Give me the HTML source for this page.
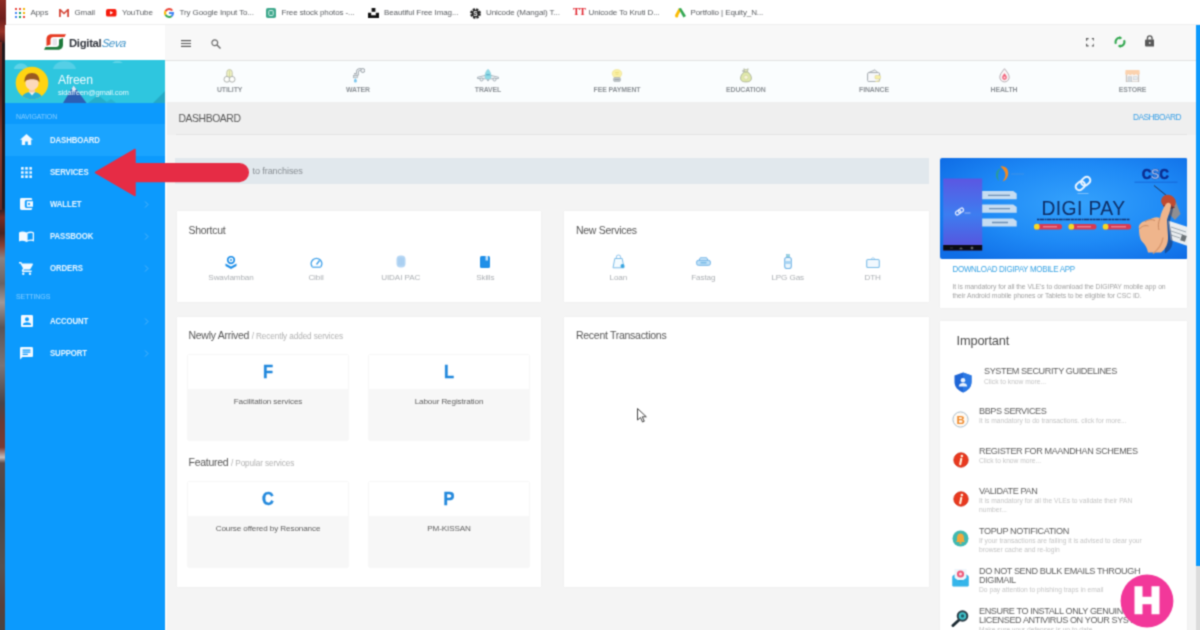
<!DOCTYPE html>
<html>
<head>
<meta charset="utf-8">
<title>Digital Seva</title>
<style>
*{box-sizing:border-box;margin:0;padding:0}
html,body{width:1200px;height:630px;overflow:hidden;background:#f4f4f4;font-family:"Liberation Sans",sans-serif;}
body{position:relative;filter:url(#gb);}
.abs{position:absolute}
.t{position:absolute;white-space:nowrap;line-height:1}
/* left strip */
#strip{left:0;top:0;width:5.500px;height:630px;background:linear-gradient(180deg,#8c2c24 0%,#6e1f1c 3%,#9a3428 5%,#6a201c 6.300%,#20181c 7%,#1c1a22 20%,#221c24 33%,#7a2c24 34.500%,#4a2420 37%,#8a4034 39%,#8a8282 41%,#6a6264 45%,#a09898 48%,#5a5456 52%,#7a7476 58%,#4a4448 64%,#6a3a34 67%,#7a3a32 71%,#c4bcbc 72.600%,#5a4a4a 73.500%,#4a4646 80%,#56504f 90%,#5a403c 96%,#4a4444 100%);}
/* bookmarks */
#bm{left:5.500px;top:0;width:1194.500px;height:25px;background:#fff;border-bottom:1px solid #efefef}
#bm .t{top:9px;font-size:8px;color:#5a5d61;letter-spacing:-0.1px}
/* header */
#hdrL{left:5px;top:25px;width:160px;height:35px;background:#fff}
#hdrR{left:165px;top:25px;width:1031px;height:36px;background:#f8f8f8;border-bottom:1px solid #e2e2e2}
/* sidebar */
#side{left:5px;top:60px;width:160px;height:570px;background:#0c9afd}
#prof{left:0;top:0;width:160px;height:43px;background:#2ec6df;overflow:hidden}
#navact{left:0;top:64px;width:160px;height:32px;background:#1aa4ff}
.nl{font-size:7px;color:#86cdff;left:11px;letter-spacing:-0.1px}
.ni{font-size:7.800px;font-weight:bold;color:#eaf6ff;left:45px;letter-spacing:-0.100px;transform:scaleY(1.140);transform-origin:0 50%}
.chev{position:absolute;left:139px;width:5px;height:7px}
/* cat bar */
#cat{left:165px;top:61px;width:1031px;height:41px;background:#fafdfe}
#cat .t{font-size:6.900px;font-weight:bold;color:#8c9196;top:25.500px;transform:translateX(-50%);letter-spacing:-0.1px}
#ttl{left:165px;top:102px;width:1031px;height:33px;background:#efefef}
#ttlline{left:176px;top:134px;width:1011px;height:1px;background:#e3e3e3}
.card{position:absolute;background:#fff;box-shadow:0 0 2px rgba(0,0,0,0.04)}
.h{font-size:10.500px;color:#555;letter-spacing:-0.280px}
.sub{font-size:8.200px;color:#b0b0b0;letter-spacing:-0.100px}
.sl{font-size:8.100px;color:#abafb3;transform:translateX(-50%);letter-spacing:-0.1px}
.tile{position:absolute;width:160px;height:85px;background:#f7f7f7;box-shadow:0 0 1.5px rgba(0,0,0,0.12)}
.tile .top{position:absolute;left:0;top:0;width:160px;height:34px;background:#fff}
.tile .L{position:absolute;left:0;width:160px;text-align:center;top:8.500px;font-size:18.200px;font-weight:bold;color:#2288dc;line-height:1;transform:scaleX(0.900);-webkit-text-stroke:0.450px #2288dc}
.tile .N{position:absolute;left:0;width:160px;text-align:center;top:43px;font-size:8.100px;color:#5e5e5e;line-height:1;letter-spacing:-0.1px}
.it{font-size:9.100px;color:#5c5c5c;letter-spacing:-0.400px}
.is{font-size:6.700px;color:#c4c4c4}
</style>
</head>
<body>
<svg width="0" height="0" style="position:absolute"><filter id="gb" x="0" y="0" width="100%" height="100%" color-interpolation-filters="sRGB"><feConvolveMatrix order="3" kernelMatrix="1 3 1 3 9 3 1 3 1" divisor="25" edgeMode="duplicate" preserveAlpha="true"/></filter></svg>
<div id="strip" class="abs"></div><div class="abs" style="left:0;top:42px;width:2px;height:168px;background:linear-gradient(180deg,#7a2a22,#5a221e 30%,#8a3a2c 60%,#6a2a24)"></div>
<div id="bm" class="abs">
  <svg class="abs" style="left:9px;top:8px" width="10" height="10" viewBox="0 0 10 10">
    <rect x="0" y="0" width="2" height="2" fill="#e8453c"/><rect x="4" y="0" width="2" height="2" fill="#e8453c"/><rect x="8" y="0" width="2" height="2" fill="#f4b400"/>
    <rect x="0" y="4" width="2" height="2" fill="#4285f4"/><rect x="4" y="4" width="2" height="2" fill="#0f9d58"/><rect x="8" y="4" width="2" height="2" fill="#f4b400"/>
    <rect x="0" y="8" width="2" height="2" fill="#4285f4"/><rect x="4" y="8" width="2" height="2" fill="#0f9d58"/><rect x="8" y="8" width="2" height="2" fill="#e8453c"/>
  </svg>
  <span class="t" style="left:25px">Apps</span>
  <svg class="abs" style="left:53px;top:8.5px" width="10" height="8" viewBox="0 0 10 8"><path d="M0 8V0h1.6L5 3.4 8.4 0H10v8H8.2V2.6L5 5.6 1.8 2.6V8z" fill="#d5483a"/></svg>
  <span class="t" style="left:69px">Gmail</span>
  <svg class="abs" style="left:100.5px;top:9px" width="10.5" height="7.5" viewBox="0 0 14 10"><rect width="14" height="10" rx="2.5" fill="#f61c0d"/><path d="M5.5 2.8v4.4L9.5 5z" fill="#fff"/></svg>
  <span class="t" style="left:116.5px">YouTube</span>
  <svg class="abs" style="left:158px;top:8px" width="10" height="10" viewBox="0 0 10 10">
    <path d="M9.2 2.2A5 5 0 0 0 5 0 5 5 0 0 0 .7 2.5l1.7 1.2A3 3 0 0 1 5 2c.9 0 1.6.3 2.2.9z" fill="#ea4335"/>
    <path d="M.7 2.5a5 5 0 0 0 0 5l1.7-1.2a3 3 0 0 1 0-2.6z" fill="#fbbc05"/>
    <path d="M.7 7.5A5 5 0 0 0 5 10c1.3 0 2.5-.5 3.4-1.300L6.800 7.400A3 3 0 0 1 2.400 6.300z" fill="#34a853"/>
    <path d="M10 5c0-.3 0-.6-.1-.9H5v1.900h2.800c-.1.600-.5 1.100-1 1.400l1.600 1.300C9.400 7.800 10 6.500 10 5z" fill="#4285f4"/>
  </svg>
  <span class="t" style="left:174px">Try Google Input To...</span>
  <svg class="abs" style="left:260px;top:8px" width="10" height="10" viewBox="0 0 10 10"><rect width="10" height="10" rx="1.800" fill="#3fa88c"/><rect x="2.800" y="2.500" width="4.400" height="5" rx=".8" fill="none" stroke="#d6f1ea" stroke-width="1"/></svg>
  <span class="t" style="left:276px">Free stock photos -...</span>
  <svg class="abs" style="left:362px;top:7.5px" width="11" height="10.500" viewBox="0 0 11 10.500"><rect x="3.600" y="0" width="3.800" height="3.800" fill="#111"/><path d="M0 4.800h3.200v2.500h4.600V4.800H11v5.700H0z" fill="#111"/></svg>
  <span class="t" style="left:378.500px">Beautiful Free Imag...</span>
  <svg class="abs" style="left:464.500px;top:7.500px" width="11" height="11" viewBox="0 0 11 11"><circle cx="5.500" cy="5.500" r="4.300" fill="none" stroke="#222" stroke-width="2.200" stroke-dasharray="2.200 1.200"/><circle cx="5.500" cy="5.500" r="3.800" fill="#222"/><text x="5.500" y="7.800" font-size="6.500" font-weight="bold" text-anchor="middle" fill="#fff" font-family="Liberation Sans">S</text></svg>
  <span class="t" style="left:480.500px">Unicode (Mangal) T...</span>
  <span class="t" style="left:567.500px;top:7px;font-family:'Liberation Serif',serif;font-weight:bold;font-size:10px;color:#e0212b;letter-spacing:-0.500px">TT</span>
  <span class="t" style="left:583px">Unicode To Kruti D...</span>
  <svg class="abs" style="left:669px;top:8px" width="11" height="10" viewBox="0 0 11 10"><path d="M3.600.5 0 7.200l2.500 1.600L6.200 2z" fill="#fbbc04"/><path d="M3.600.5 6 0l5 8-2.600 1.500z" fill="#34a853"/><circle cx="1.700" cy="8" r="1.600" fill="#fbbc04"/></svg>
  <span class="t" style="left:685px">Portfolio | Equity_N...</span>
</div>
<div id="hdrL" class="abs">
  <svg class="abs" style="left:38px;top:8px" width="24" height="18" viewBox="0 0 24 18">
    <path d="M23 1.200 21.500 4H10.500C8.500 4 7.500 5 7.500 7v4.500L3.500 13V6.500C3.500 3 5.500 1.200 9 1.200z" fill="#e63a22"/>
    <path d="M1 16.800 2.500 14H13c2 0 3-1 3-3V6.500L20 5v6.500c0 3.500-2 5.300-5.500 5.300z" fill="#1f7a3c"/>
    <rect x="9.500" y="5.500" width="4.500" height="7" rx="1" fill="#e9e4ec"/>
  </svg>
  <span class="t" style="left:64px;top:12.500px;font-size:11.300px;font-weight:bold;color:#31353d;letter-spacing:-0.300px">Digital</span>
  <span class="t" style="left:96.800px;top:12.500px;font-size:11.300px;font-style:italic;color:#3f93c8;letter-spacing:-0.500px;transform:skewX(-7deg)">Seva</span>
</div>
<div id="hdrR" class="abs">
  <svg class="abs" style="left:16px;top:15px" width="10" height="7" viewBox="0 0 10 7"><path d="M0 .6h10M0 3.500h10M0 6.400h10" stroke="#5a5a5a" stroke-width="1.150"/></svg>
  <svg class="abs" style="left:46px;top:14px" width="10" height="10" viewBox="0 0 10 10"><circle cx="3.800" cy="3.800" r="2.900" fill="none" stroke="#6a6a6a" stroke-width="1.200"/><path d="M6 6l3.500 3.500" stroke="#6a6a6a" stroke-width="1.400"/></svg>
  <svg class="abs" style="left:920.500px;top:13px" width="8.500" height="8.500" viewBox="0 0 9 9"><path d="M.6 2.800V.6h2.200M6.200.6h2.200v2.200M8.400 6.200v2.200H6.200M2.800 8.400H.6V6.200" fill="none" stroke="#5e5e5e" stroke-width="1.250"/></svg>
  <svg class="abs" style="left:948.500px;top:10.800px" width="12" height="12" viewBox="0 0 12 12"><path d="M6 1.800A4.200 4.200 0 0 0 2 7.800M6 10.200A4.200 4.200 0 0 0 10 4.200" fill="none" stroke="#35a852" stroke-width="2.100"/><path d="M5.500 0 8.200 1.900 5.500 3.800zM6.500 12 3.800 10.100 6.500 8.200z" fill="#2ea84a"/></svg>
  <svg class="abs" style="left:979.500px;top:10.200px" width="9.500" height="11.500" viewBox="0 0 9 11"><path d="M2.300 4.500V3a2.200 2.200 0 0 1 4.400 0v1.500" fill="none" stroke="#585858" stroke-width="1.300"/><rect x="0" y="4.300" width="9" height="6.700" rx="1" fill="#585858"/><circle cx="4.500" cy="7.600" r=".9" fill="#ddd"/></svg>
</div>
<div id="side" class="abs">
  <div id="prof" class="abs">
    <svg class="abs" style="left:0;top:0" width="160" height="43" viewBox="0 0 160 43">
      <path d="M9 9c0-3 3-5.500 7-5.500S23 6 23 9z" fill="#5fd3e8"/>
      <path d="M48 9c1-5 6-8 11.500-8S70 4 71 9z" fill="#55cfe6"/>
      <path d="M107 2.500c2-1.500 9-1.500 11 0z" fill="#8fe2f0"/>
      <path d="M83 43 93 35l10 8z" fill="#26aec9"/>
      <path d="M100 43l6-4 5 4z" fill="#29b4cf"/>
      <path d="M148 43 160 31v12z" fill="#25a9c6"/>
      <path d="M58 43 68.600 25.500 81.500 43z" fill="#2c5fb4"/>
      <path d="M68.600 25.500 71.500 29.500 69 31.500 66.500 29z" fill="#dfeaf6"/>
    </svg>
    <svg class="abs" style="left:10px;top:5.500px" width="34" height="34" viewBox="0 0 34 34">
      <defs><clipPath id="av"><circle cx="17" cy="17" r="16.300"/></clipPath></defs>
      <circle cx="17" cy="17" r="16.300" fill="#ffd412"/>
      <g clip-path="url(#av)">
        <path d="M6 36c0-7 4-10 11-10s11 3 11 10z" fill="#2bb1d6"/>
        <path d="M13.500 25.500h7l-3.500 4z" fill="#f3f3f3"/>
        <rect x="14.200" y="21" width="5.600" height="5.500" fill="#f6c9a4"/>
        <ellipse cx="17" cy="17" rx="6.600" ry="7.200" fill="#fcd9bc"/>
        <path d="M9.600 16.500C9 10 12.500 7 17 7s8 3 7.400 9.500c-1-2.500-3-3.300-7.400-3.300s-6.400.8-7.400 3.300z" fill="#9a5a20"/>
      </g>
    </svg>
    <span class="t" style="left:53px;top:14px;font-size:12.200px;color:#f0fbff;letter-spacing:-0.200px">Afreen</span>
    <span class="t" style="left:53px;top:29px;font-size:7.600px;color:#e6f8fc;letter-spacing:-0.150px">sidafreen@gmail.com</span>
  </div>
  <div id="navact" class="abs"></div>
  <span class="t nl" style="top:52.500px">NAVIGATION</span>
  <span class="t nl" style="top:233px">SETTINGS</span>

  <svg class="abs" style="left:15px;top:73.500px" width="13" height="11.500" viewBox="0 0 13 11.500"><path d="M6.500 0 0 5.800h1.800v5.700h3.400V7.600h2.600v3.900h3.400V5.800H13z" fill="#f2f9ff"/></svg>
  <span class="t ni" style="top:76.500px">DASHBOARD</span>

  <svg class="abs" style="left:16px;top:106.500px" width="11" height="11" viewBox="0 0 11 11" fill="#e9f5ff"><rect x="0" y="0" width="2.700" height="2.700" rx=".4"/><rect x="4.150" y="0" width="2.700" height="2.700" rx=".4"/><rect x="8.300" y="0" width="2.700" height="2.700" rx=".4"/><rect x="0" y="4.150" width="2.700" height="2.700" rx=".4"/><rect x="4.150" y="4.150" width="2.700" height="2.700" rx=".4"/><rect x="8.300" y="4.150" width="2.700" height="2.700" rx=".4"/><rect x="0" y="8.300" width="2.700" height="2.700" rx=".4"/><rect x="4.150" y="8.300" width="2.700" height="2.700" rx=".4"/><rect x="8.300" y="8.300" width="2.700" height="2.700" rx=".4"/></svg>
  <span class="t ni" style="top:108.500px">SERVICES</span>

  <svg class="abs" style="left:15px;top:138px" width="13" height="12" viewBox="0 0 13 12"><path d="M1.500 0h9.300c.8 0 1.400.6 1.400 1.400V2H6.500C5.500 2 4.800 2.800 4.800 3.700v4.600c0 .9.700 1.700 1.700 1.700h5.700v.6c0 .8-.6 1.400-1.400 1.400H1.500C.7 12 0 11.400 0 10.600V1.400C0 .6.700 0 1.500 0z" fill="#f2f9ff"/><path d="M6.800 3.300H13v5.400H6.800zM9 4.900a1.100 1.100 0 1 0 0 2.200 1.100 1.100 0 0 0 0-2.200z" fill="#f2f9ff" fill-rule="evenodd"/></svg>
  <span class="t ni" style="top:140.800px">WALLET</span>

  <svg class="abs" style="left:14px;top:170.500px" width="15" height="11.500" viewBox="0 0 15 11.500"><path d="M0 1.500C2 .3 5 .3 7.500 1.600 10 .3 13 .3 15 1.500v9c-2-1-5-1-7.500.5C5 9.500 2 9.500 0 10.500z" fill="#f2f9ff"/><path d="M8.600 2.600c1.600-.8 3.600-.9 5.100-.4v6.600c-1.500-.4-3.500-.3-5.100.5z" fill="#0c9afd"/></svg>
  <span class="t ni" style="top:172.800px">PASSBOOK</span>

  <svg class="abs" style="left:14px;top:201.500px" width="14" height="13" viewBox="0 0 14 13"><path d="M0 0h2.300l.7 1.500h10.300c.5 0 .8.500.6.900l-2.300 4.300c-.3.500-.7.700-1.200.700H5l-.7 1.200h8.400v1.400H4.200c-1 0-1.700-1.100-1.200-2l1-1.800L1.400 1.400H0z" fill="#f2f9ff"/><circle cx="4.300" cy="11.800" r="1.200" fill="#f2f9ff"/><circle cx="11" cy="11.800" r="1.200" fill="#f2f9ff"/></svg>
  <span class="t ni" style="top:204.800px">ORDERS</span>

  <svg class="abs" style="left:15.500px;top:255px" width="12" height="12" viewBox="0 0 12 12"><path d="M1.300 0h9.400C11.400 0 12 .6 12 1.300v9.400c0 .7-.6 1.300-1.300 1.300H1.300C.6 12 0 11.400 0 10.700V1.300C0 .6.600 0 1.300 0zM6 2.300a2 2 0 1 0 0 4 2 2 0 0 0 0-4zM2 10h8v-.7C10 8 7.300 7.300 6 7.300S2 8 2 9.300z" fill="#f2f9ff" fill-rule="evenodd"/></svg>
  <span class="t ni" style="top:257.500px">ACCOUNT</span>

  <svg class="abs" style="left:15px;top:287px" width="13" height="12.500" viewBox="0 0 13 12.500"><path d="M1.300 0h10.400c.7 0 1.300.6 1.300 1.300v7.400c0 .7-.6 1.300-1.300 1.300H2.600L0 12.500V1.300C0 .6.600 0 1.300 0zM2.600 2.500v1.200h7.800V2.500zM2.600 4.600v1.200h7.800V4.600zM2.600 6.700v1.200h5.200V6.700z" fill="#f2f9ff" fill-rule="evenodd"/></svg>
  <span class="t ni" style="top:289.500px">SUPPORT</span>

  <svg class="chev" style="top:140.500px" viewBox="0 0 5 7"><path d="M1 .5 4 3.500 1 6.500" fill="none" stroke="#4db2fa" stroke-width="1"/></svg>
  <svg class="chev" style="top:172.500px" viewBox="0 0 5 7"><path d="M1 .5 4 3.500 1 6.500" fill="none" stroke="#4db2fa" stroke-width="1"/></svg>
  <svg class="chev" style="top:204.500px" viewBox="0 0 5 7"><path d="M1 .5 4 3.500 1 6.500" fill="none" stroke="#4db2fa" stroke-width="1"/></svg>
  <svg class="chev" style="top:258px" viewBox="0 0 5 7"><path d="M1 .5 4 3.500 1 6.500" fill="none" stroke="#4db2fa" stroke-width="1"/></svg>
  <svg class="chev" style="top:290px" viewBox="0 0 5 7"><path d="M1 .5 4 3.500 1 6.500" fill="none" stroke="#4db2fa" stroke-width="1"/></svg>
</div>
<div id="cat" class="abs">
<svg class="abs" style="left:58.1px;top:7.5px" width="13" height="14" viewBox="0 0 13 14"><rect x="3.800" y="0.600" width="5.400" height="9.500" rx="2.700" fill="#f1f4c4" stroke="#b4b7a0" stroke-width=".8"/><path d="M6.500 1.500v7" stroke="#d3d99a" stroke-width="1"/><circle cx="3.900" cy="10.300" r="2.900" fill="#fdfefb" stroke="#a6aaa8" stroke-width=".9"/><circle cx="9.100" cy="10.300" r="2.900" fill="#fdfefb" stroke="#a6aaa8" stroke-width=".9"/></svg>
<span class="t" style="left:64.600px">UTILITY</span>
<svg class="abs" style="left:186.5px;top:6.5px" width="13" height="15" viewBox="0 0 13 15"><path d="M2 6.300h3.400V4.200C5.400 2.600 6.600 1.600 8 1.600h1.500" fill="none" stroke="#8f979e" stroke-width="2.600"/><path d="M2 6.300h3.400V4.200C5.400 2.600 6.600 1.600 8 1.600h1.500" fill="none" stroke="#edf1f4" stroke-width="1.100"/><circle cx="10.800" cy="2.500" r="2" fill="#f2f4f6" stroke="#8f979e" stroke-width=".9"/><rect x="1.300" y="7.600" width="4.200" height="2.200" fill="#dfe6ea" stroke="#9aa2a8" stroke-width=".6"/><path d="M3.400 10.300c1 1.300 1.500 2 1.500 2.700a1.500 1.500 0 0 1-3 0c0-.7.500-1.400 1.500-2.700z" fill="#7cc6ee"/></svg>
<span class="t" style="left:193px">WATER</span>
<svg class="abs" style="left:312.0px;top:8px" width="22" height="13" viewBox="0 0 22 13"><path d="M.5 8.200 8 6.500h6l7.500 1.700v1.300L14 9.800H8L.5 9.500z" fill="#eef3f6" stroke="#98a4ad" stroke-width=".8"/><path d="M11 .3c2 1.800 3 4.300 3 7.200 0 1.700-1.300 3-3 3s-3-1.300-3-3C8 4.600 9 2.100 11 .3z" fill="#8fdbe6" stroke="#7fc3d2" stroke-width=".5"/><path d="M9.200 5.800h3.600" stroke="#4f9fc0" stroke-width="1"/><circle cx="4.500" cy="10.500" r="1.500" fill="#f4f7f9" stroke="#8f9aa3" stroke-width=".8"/><circle cx="17.500" cy="10.500" r="1.500" fill="#f4f7f9" stroke="#8f9aa3" stroke-width=".8"/><circle cx="11" cy="11.300" r="1" fill="#a9b3ba"/></svg>
<span class="t" style="left:323px">TRAVEL</span>
<svg class="abs" style="left:446.0px;top:7.5px" width="12" height="13" viewBox="0 0 12 13"><path d="M1.200 5C.9 2.500 3 .6 6 .6s5.100 1.900 4.800 4.400c-.3 1.700-1.400 2.300-1.700 3.500H2.900C2.600 7.300 1.500 6.700 1.200 5z" fill="#faf0a6" stroke="#e8dc8a" stroke-width=".5"/><path d="M4 3.500h4M4.500 5.200h3" stroke="#e8d870" stroke-width=".7"/><rect x="2.600" y="8.600" width="6.800" height="4" rx="1.300" fill="#c3c9cd" stroke="#a0a7ad" stroke-width=".6"/><path d="M3.500 10.600h5" stroke="#8d959b" stroke-width=".8"/></svg>
<span class="t" style="left:452px">FEE PAYMENT</span>
<svg class="abs" style="left:574.8px;top:7px" width="12" height="14.5" viewBox="0 0 12 14.5"><path d="M4.500 3.800C2 5.500.6 8 .6 10.200.6 12.500 2 13.900 6 13.900s5.400-1.400 5.400-3.700c0-2.200-1.400-4.700-3.900-6.400z" fill="#e0e9aa" stroke="#a4aa94" stroke-width=".8"/><path d="M3.800 .8 6 1.900 8.200.8 7.400 3.800H4.600z" fill="#eef0c0" stroke="#a4aa94" stroke-width=".7"/><circle cx="6" cy="9.300" r="2.100" fill="#f7f5d6" stroke="#c4c99a" stroke-width=".5"/><circle cx="3.200" cy="3" r="1" fill="#b5b9b0"/></svg>
<span class="t" style="left:580.800px">EDUCATION</span>
<svg class="abs" style="left:702.0px;top:7.5px" width="14" height="13.5" viewBox="0 0 14 13.5"><path d="M1.200 3.800 8 .8l3 3" fill="#f4f5f6" stroke="#a3a9af" stroke-width=".9"/><rect x=".6" y="3.600" width="12" height="9" rx="1.200" fill="#f8f9fa" stroke="#a3a9af" stroke-width="1"/><rect x="8" y="6.500" width="5.500" height="3.400" rx=".8" fill="#f8f0a8" stroke="#d5cc8a" stroke-width=".5"/><path d="M8.500 12.600l4-1" stroke="#e8e0a0" stroke-width="1.200"/></svg>
<span class="t" style="left:709px">FINANCE</span>
<svg class="abs" style="left:833.5px;top:7px" width="11" height="14.5" viewBox="0 0 11 14.5"><path d="M5.500 .7C8 4 10.200 6.500 10.200 9.200a4.700 4.700 0 0 1-9.400 0C.8 6.500 3 4 5.500.7z" fill="#fcf6f7" stroke="#ada5ab" stroke-width=".9"/><path d="M5.500 5.300c1.400 1.800 2.400 3 2.400 4.200a2.400 2.400 0 0 1-4.800 0c0-1.200 1-2.400 2.400-4.200z" fill="#f0647c"/><circle cx="5.500" cy="9.500" r="1" fill="#fce0e5"/></svg>
<span class="t" style="left:839px">HEALTH</span>
<svg class="abs" style="left:960.0px;top:7.5px" width="15" height="13.5" viewBox="0 0 15 13.5"><rect x="1.300" y="4.500" width="12.400" height="8.500" fill="#f8f5f3" stroke="#b8aea8" stroke-width=".8"/><path d="M.6 1h13.800l.4 3.200c0 1-.9 1.700-1.900 1.700s-1.800-.6-1.900-1.500c-.1.900-.9 1.500-1.900 1.500s-1.800-.6-1.900-1.500c-.1.900-.9 1.500-1.900 1.500s-1.800-.6-1.900-1.500C3.400 5.300 2.600 5.900 1.800 5.900.8 5.900.2 5.200.2 4.200z" fill="#fbd2ae"/><rect x="3" y="7.800" width="3.800" height="5.200" fill="#d5dbe0" stroke="#b0b6bb" stroke-width=".4"/><rect x="8.400" y="7.800" width="3.800" height="3" fill="#e6ebef" stroke="#b8bec3" stroke-width=".4"/></svg>
<span class="t" style="left:967.500px">ESTORE</span>
</div>
<div id="ttl" class="abs">
  <span class="t" style="left:13.500px;top:12px;font-size:10.400px;color:#555;letter-spacing:-0.420px;transform:scaleY(1.12);transform-origin:0 50%">DASHBOARD</span>
  <span class="t" style="left:968px;top:11px;font-size:8.400px;color:#3aa0e6;letter-spacing:-0.550px">DASHBOARD</span>
</div>
<div id="ttlline" class="abs"></div>
<div class="abs" style="left:165px;top:102px;width:2px;height:528px;background:#fbfbfb"></div>
<div id="main">
<div class="abs" style="left:175px;top:158px;width:754px;height:26px;background:#e1e8ed"></div>
<span class="t" style="left:252.500px;top:166.500px;font-size:9.100px;color:#888e93;letter-spacing:-0.100px">to franchises</span>
<div class="card" style="left:176.500px;top:210.500px;width:364.500px;height:91px">
<span class="t h" style="left:12px;top:14.500px">Shortcut</span>
<svg class="abs" style="left:48.5px;top:45.3px" width="12" height="13" viewBox="0 0 12 13"><circle cx="6" cy="4" r="3.300" fill="none" stroke="#1f8fe8" stroke-width="1.700"/><circle cx="6" cy="4" r="1" fill="#1f8fe8"/><path d="M.5 7.500 6 10.500 11.500 7.500V10L6 13 .5 10z" fill="#1f8fe8"/></svg>
<svg class="abs" style="left:133.0px;top:46.3px" width="13" height="11" viewBox="0 0 13 11"><path d="M2.200 9.800A5.300 5.300 0 1 1 10.800 9.800" fill="none" stroke="#45a3ea" stroke-width="1.500"/><path d="M6.500 7.500 9.500 3.500" stroke="#45a3ea" stroke-width="1.400"/><path d="M2.200 10.200h8.600" stroke="#45a3ea" stroke-width="1.200"/></svg>
<svg class="abs" style="left:219.2px;top:44.5px" width="10" height="13" viewBox="0 0 10 13"><rect x=".5" y=".5" width="9" height="12" rx="4" fill="#b5d6f4"/><path d="M3 3v7M5 2.500v8M7 3v7" stroke="#9cc6ee" stroke-width=".8"/></svg>
<svg class="abs" style="left:303.8px;top:45.5px" width="10" height="12" viewBox="0 0 10 12"><rect x="0" y="0" width="10" height="12" rx="1.500" fill="#1f8fe8"/><rect x="5.500" y="0" width="2.500" height="4.500" fill="#bfe0fa"/></svg>
<span class="t sl" style="left:54.5px;top:63.7px">Swavlamban</span>
<span class="t sl" style="left:139.5px;top:63.7px">Cibil</span>
<span class="t sl" style="left:224.2px;top:63.7px">UIDAI PAC</span>
<span class="t sl" style="left:308.8px;top:63.7px">Skills</span>
</div>
<div class="card" style="left:564px;top:210.500px;width:364.500px;height:91px">
<span class="t h" style="left:12px;top:14.500px">New Services</span>
<svg class="abs" style="left:47.8px;top:43.5px" width="13" height="15" viewBox="0 0 13 15"><path d="M4.300 4.500V3.200a2.200 2.200 0 0 1 4.400 0v1.300" fill="none" stroke="#8ec4ee" stroke-width="1"/><path d="M2.800 4.500h7.400L12 13.800H1z" fill="#f4fbff" stroke="#7dbde8" stroke-width="1"/><circle cx="10.500" cy="12" r="2" fill="#3aa6e0"/></svg>
<svg class="abs" style="left:131.8px;top:46.5px" width="15" height="10" viewBox="0 0 15 10"><path d="M3 3.500 4.300 .8h6.400L12 3.500" fill="#d9edfb" stroke="#6fb2e6" stroke-width="1"/><rect x=".6" y="3.300" width="13.800" height="5" rx="1.800" fill="#bfe0f7" stroke="#6fb2e6" stroke-width="1"/><rect x="4.500" y="4.800" width="6" height="1.800" fill="#7dbde8"/></svg>
<svg class="abs" style="left:219.7px;top:43.5px" width="8" height="15" viewBox="0 0 8 15"><rect x="2.500" y=".5" width="3" height="2.500" fill="#9fd8d0" stroke="#7dbde8" stroke-width=".6"/><rect x=".7" y="3.500" width="6.600" height="11" rx="2" fill="#eaf6fd" stroke="#6fb2e6" stroke-width="1.100"/><rect x=".7" y="7" width="6.600" height="3" fill="#a9d4f3"/></svg>
<svg class="abs" style="left:301.7px;top:46.5px" width="14" height="11" viewBox="0 0 14 11"><path d="M4.500 2.500 7 .5 9.500 2.500" fill="none" stroke="#9ccbee" stroke-width=".9"/><rect x=".7" y="2.500" width="12.600" height="8" rx="1.300" fill="#f1f8fe" stroke="#7dbde8" stroke-width="1.100"/></svg>
<span class="t sl" style="left:54.3px;top:63.7px">Loan</span>
<span class="t sl" style="left:139.3px;top:63.7px">Fastag</span>
<span class="t sl" style="left:223.7px;top:63.7px">LPG Gas</span>
<span class="t sl" style="left:308.7px;top:63.7px">DTH</span>
</div>
<div class="card" style="left:176.500px;top:316.500px;width:364.500px;height:270.500px">
<span class="t h" style="left:12px;top:13px">Newly Arrived <span class="sub">/ Recently added services</span></span>
<div class="tile" style="left:11.500px;top:38px"><div class="top"></div><div class="L">F</div><div class="N">Facilitation services</div></div>
<div class="tile" style="left:192.500px;top:38px"><div class="top"></div><div class="L">L</div><div class="N">Labour Registration</div></div>
<span class="t h" style="left:12px;top:140px">Featured <span class="sub">/ Popular services</span></span>
<div class="tile" style="left:11.500px;top:165px"><div class="top"></div><div class="L">C</div><div class="N">Course offered by Resonance</div></div>
<div class="tile" style="left:192.500px;top:165px"><div class="top"></div><div class="L">P</div><div class="N">PM-KISSAN</div></div>
</div>
<div class="card" style="left:564px;top:316.500px;width:364.500px;height:270.500px">
<span class="t h" style="left:12px;top:13px">Recent Transactions</span>
</div>
</div>
<div id="right">
<div class="card" style="left:939.500px;top:158px;width:247.500px;height:149.500px"></div>
<svg class="abs" style="left:939.500px;top:158px" width="247.500" height="101" viewBox="0 0 247.500 101">
  <defs>
    <radialGradient id="bg" cx="55%" cy="45%" r="70%"><stop offset="0" stop-color="#35a2fc"/><stop offset=".55" stop-color="#1e8af6"/><stop offset="1" stop-color="#0f6de6"/></radialGradient>
    <linearGradient id="ph" x1="0" y1="0" x2="0" y2="1"><stop offset="0" stop-color="#5b57e2"/><stop offset=".5" stop-color="#3d7df0"/><stop offset="1" stop-color="#5b4fdb"/></linearGradient>
    <clipPath id="bc"><rect width="247.500" height="101" rx="2"/></clipPath>
  </defs>
  <g clip-path="url(#bc)">
  <rect width="247.500" height="101" fill="url(#bg)"/>
  <!-- phone -->
  <rect x="3.200" y="20.500" width="39" height="72" fill="url(#ph)"/>
  <rect x="3.200" y="87" width="39" height="5.500" fill="#0b0b14"/>
  <path d="M10 90h3M21 89.500l1.500 1.500h-3zM31 89h2v2h-2z" stroke="#666" stroke-width=".5" fill="#666"/>
  <g transform="translate(19.500 53.500) rotate(-35)" fill="none" stroke="#dfe9ff" stroke-width="1.300"><rect x="-4.500" y="-1.800" width="5.500" height="3.600" rx="1.800"/><rect x="-1" y="-1.800" width="5.500" height="3.600" rx="1.800"/></g>
  <path d="M24.500 55h6" stroke="#a9c2f5" stroke-width=".9"/>
  <!-- tags -->
  <path d="M42.200 33h31l3.500 2.500v5.800H42.200zM42.200 46.400h31l3.500 2.500v5.800H42.200zM42.200 60.400h31l3.500 2.500v5.500H42.200z" fill="#c6dcf1"/>
  <path d="M48 37.300h22M49 50.700h21M52 64.500h16" stroke="#6d8fb5" stroke-width="1.300"/>
  <!-- swirl logo -->
  <path d="M60.500 8.500c5-1 9 3 7.500 9-1 3.500-3.500 5.500-5.500 6 2.500-3 3.500-6 2.500-9-.7-2.200-2.300-4-4.500-6z" fill="#f08a24"/>
  <path d="M61.500 10c-3 3-4.500 7-2.500 13-1.500-1-3.500-4-3-7.500.4-2.800 2.500-5 5.500-5.500z" fill="#2a9a9a"/>
  <path d="M71 16h13" stroke="#3f92e8" stroke-width="1.600" opacity=".6"/>
  <!-- link icon -->
  <g transform="translate(143 25.500) rotate(-40)" fill="none" stroke="#e9f4ff" stroke-width="2"><rect x="-8.500" y="-3.500" width="10" height="7" rx="3.500"/><rect x="-1.500" y="-3.500" width="10" height="7" rx="3.500"/></g>
  <path d="M137.500 35.500h11" stroke="#7fc1fb" stroke-width="1.200"/>
  <!-- DIGI PAY -->
  <text x="101.500" y="57.300" font-family="Liberation Sans" font-size="19.300" fill="#0e2e66" letter-spacing=".400">DIGI PAY</text>
  <path d="M97 61.500h92.500" stroke="#12306e" stroke-width="1.700" stroke-dasharray="2.500 .5 4 .6 1.500 .5 5 .6 3 .5"/>
  <rect x="94" y="66" width="28" height="5.500" rx="2.700" fill="#d83a52"/><circle cx="96.800" cy="68.700" r="2.900" fill="#f5d824"/>
  <rect x="128.500" y="66" width="28" height="5.500" rx="2.700" fill="#d83a52"/><circle cx="131.300" cy="68.700" r="2.900" fill="#f5d824"/>
  <rect x="162.800" y="66" width="28.300" height="5.500" rx="2.700" fill="#d83a52"/><circle cx="165.600" cy="68.700" r="2.900" fill="#f5d824"/>
  <path d="M103 68.800h14M137 68.800h14M171 68.800h15" stroke="#f1a3ad" stroke-width="1"/>
  <!-- CSC -->
  <text x="202" y="20.800" font-family="Liberation Sans" font-weight="bold" font-size="15" fill="#0c2c8e" letter-spacing="-.300" textLength="26.500" lengthAdjust="spacingAndGlyphs" stroke="#0c2c8e" stroke-width=".7">CSC</text>
  <text x="210.700" y="20.800" font-family="Liberation Sans" font-weight="bold" font-size="15" fill="#8fb0e8" textLength="8.800" lengthAdjust="spacingAndGlyphs">S</text>
  <path d="M194.500 24.200h43" stroke="#1560cf" stroke-width=".8"/>
  <!-- wire & device -->
  <path d="M214 27.500 227 38" stroke="#23304f" stroke-width="1"/>
  <path d="M225 52 235 62 240.500 56 236 44z" fill="#8f8f92"/>
  <ellipse cx="228.500" cy="43.500" rx="7.500" ry="6.500" fill="#c04a30" transform="rotate(25 228.500 43.500)"/>
  <path d="M223.500 47.500c3 2.500 7.500 3.500 11 1.500" stroke="#7a2a1c" stroke-width="1.400" fill="none"/>
  <!-- card -->
  <path d="M228 62.500 247.500 69v19l-17-6z" fill="#e9edf0"/>
  <path d="M231 69l15 5M231 73l12 4M231 77l9 3" stroke="#9aa5ad" stroke-width="1"/>
  <rect x="241" y="77" width="5" height="6" fill="#6d7478" transform="rotate(18 243 80)"/>
  <!-- hand -->
  <path d="M225 95.500c5-3 8-7 7.500-13l-3-18c1-4 3-9 3.500-14 .2-3-2.500-4.500-4.500-2.500-3 4-5 9-6 14z" fill="#1c2f5c" opacity=".55"/>
  <path d="M199 71c-1-4 2-7 6-8l8-3c2-1 5-1 7 0 1-5 3-10 6-14 2-2.500 5.500-1 5 2-.5 5-3 10-4 14l1 16c.5 7-2 13-7 16.500h-13c-1-5-3-8-6-11-2-2-3-7-3-12.500z" fill="#efb58c"/>
  <path d="M199.500 71c2-3 6-4 9-3M205 63.500c3-2 7-2.500 10-1M220 60c-2 5-2 9-1 12" stroke="#c98a62" stroke-width="1" fill="none"/>
  <path d="M213 95.500c4-3 9-9 10-16" stroke="#d9996e" stroke-width="1.500" fill="none"/>
  </g>
</svg>
<span class="t" style="left:952.500px;top:265.500px;font-size:8px;color:#35a2e4;letter-spacing:-0.310px;transform:scaleY(1.080);transform-origin:0 50%">DOWNLOAD DIGIPAY MOBILE APP</span>
<span class="t" style="left:952.500px;top:283.500px;font-size:6.800px;color:#9f9f9f;letter-spacing:-0.050px">It is mandatory for all the VLE's to download the DIGIPAY mobile app on</span>
<span class="t" style="left:952.500px;top:292.800px;font-size:6.800px;color:#9f9f9f;letter-spacing:-0.050px">their Android mobile phones or Tablets to be eligible for CSC ID.</span>
<div class="card" style="left:940px;top:321px;width:247px;height:320px">
  <span class="t" style="left:16.500px;top:13.500px;font-size:12.800px;color:#4c4c4c;letter-spacing:-0.150px">Important</span>
  <!-- 1 shield -->
  <svg class="abs" style="left:14px;top:51px" width="18" height="21" viewBox="0 0 18 21"><path d="M9 .5 17.500 3.500V10c0 5-3.500 8.500-8.500 10.500C4 18.500.5 15 .5 10V3.500z" fill="#1f66d6"/><path d="M9 .5 17.500 3.500V10c0 5-3.500 8.500-8.500 10.500z" fill="#2a78e4"/><circle cx="9" cy="8.300" r="2.300" fill="#eaf2fd"/><path d="M4.800 14.500c0-2.500 2-3.500 4.200-3.500s4.200 1 4.200 3.500z" fill="#eaf2fd"/></svg>
  <span class="t it" style="left:44px;top:45.500px">SYSTEM SECURITY GUIDELINES</span>
  <span class="t is" style="left:44px;top:57.500px">Click to know more...</span>
  <!-- 2 bbps -->
  <svg class="abs" style="left:12px;top:89.500px" width="17" height="17" viewBox="0 0 17 17"><circle cx="8.500" cy="8.500" r="7.600" fill="#fffaf3" stroke="#a9bccb" stroke-width="1"/><text x="8.700" y="12.600" font-family="Liberation Sans" font-weight="bold" font-size="11.500" text-anchor="middle" fill="#f08a2c">B</text></svg>
  <span class="t it" style="left:39px;top:85.500px">BBPS SERVICES</span>
  <span class="t is" style="left:39px;top:97px">It is mandatory to do transactions. click for more...</span>
  <!-- 3 -->
  <svg class="abs" style="left:12.500px;top:130.500px" width="16" height="16" viewBox="0 0 16 16"><circle cx="8" cy="8" r="7.200" fill="#e8391f"/><circle cx="8" cy="8" r="7.200" fill="none" stroke="#d02a12" stroke-width=".8"/><path d="M8.300 6.800 7.200 12.300" stroke="#fff1dc" stroke-width="2.100" stroke-linecap="round"/><circle cx="8.900" cy="3.900" r="1.250" fill="#fff6e6"/></svg>
  <span class="t it" style="left:39px;top:125.500px">REGISTER FOR MAANDHAN SCHEMES</span>
  <span class="t is" style="left:39px;top:137px">Click to know more...</span>
  <!-- 4 -->
  <svg class="abs" style="left:12.500px;top:170px" width="16" height="16" viewBox="0 0 16 16"><circle cx="8" cy="8" r="7.200" fill="#e8391f"/><circle cx="8" cy="8" r="7.200" fill="none" stroke="#d02a12" stroke-width=".8"/><path d="M8.300 6.800 7.200 12.300" stroke="#fff1dc" stroke-width="2.100" stroke-linecap="round"/><circle cx="8.900" cy="3.900" r="1.250" fill="#fff6e6"/></svg>
  <span class="t it" style="left:39px;top:165.500px">VALIDATE PAN</span>
  <span class="t is" style="left:39px;top:176.500px">It is mandatory for all the VLEs to validate their PAN</span>
  <span class="t is" style="left:39px;top:185.500px">number...</span>
  <!-- 5 -->
  <svg class="abs" style="left:12px;top:209px" width="17" height="17" viewBox="0 0 17 17"><circle cx="8.500" cy="8.500" r="8" fill="#3fb9b1"/><path d="M8.500 3.500c2.300 0 3.500 2 3.500 4.500v2.500l1 1.500H4l1-1.500V8c0-2.500 1.200-4.500 3.500-4.500z" fill="#f3a83c"/><circle cx="8.500" cy="13.200" r="1.100" fill="#f3a83c"/></svg>
  <span class="t it" style="left:39px;top:205.500px">TOPUP NOTIFICATION</span>
  <span class="t is" style="left:39px;top:216.500px">If your transactions are failing it is advised to clear your</span>
  <span class="t is" style="left:39px;top:225.500px">browser cache and re-login</span>
  <!-- 6 mail -->
  <svg class="abs" style="left:12px;top:247px" width="17" height="19" viewBox="0 0 17 19"><path d="M.5 8 8.500 2 16.500 8v9.500c0 .6-.4 1-1 1h-14c-.6 0-1-.4-1-1z" fill="#29a9e0"/><rect x="2.500" y="1" width="12" height="11" fill="#eef6fb"/><circle cx="8.500" cy="6" r="3.600" fill="#ee5a7a"/><circle cx="8.500" cy="6" r="1.500" fill="#fbd7de"/><path d="M.5 8.500 8.500 14 16.500 8.500V18H.5z" fill="#35b5ea"/></svg>
  <span class="t it" style="left:39px;top:245.500px">DO NOT SEND BULK EMAILS THROUGH</span>
  <span class="t it" style="left:39px;top:254.800px">DIGIMAIL</span>
  <span class="t is" style="left:39px;top:266px">Do pay attention to phishing traps in email</span>
  <!-- 7 -->
  <svg class="abs" style="left:11px;top:288px" width="19" height="18" viewBox="0 0 19 18"><path d="M2 16.500 8 11" stroke="#1d2b33" stroke-width="3" stroke-linecap="round"/><circle cx="11.500" cy="7" r="5.800" fill="#2c3e48"/><circle cx="11.500" cy="7" r="3.800" fill="#3fc0c9"/><circle cx="11.500" cy="7" r="1.700" fill="#1e5d6a"/></svg>
  <span class="t it" style="left:39px;top:285.500px">ENSURE TO INSTALL ONLY GENUINE</span>
  <span class="t it" style="left:39px;top:294.800px">LICENSED ANTIVIRUS ON YOUR SYSTEM</span>
  <span class="t is" style="left:39px;top:306px">Make sure your defenses is up to date</span>
</div>
</div>
<div id="overlay">
  <div class="abs" style="left:1195.500px;top:25px;width:4.500px;height:541px;background:#0c9afd"></div>
  <div class="abs" style="left:1195.500px;top:566px;width:4.500px;height:64px;background:#dcdcdc"></div>
  <svg class="abs" style="left:90px;top:144px" width="165" height="58" viewBox="0 0 165 58">
    <path d="M5.500 28.500 45 5.500V19.800H149.500a8.800 8.800 0 0 1 0 17.600H45V51.500z" fill="#e62c45" stroke="#e62c45" stroke-width="1.500" stroke-linejoin="round"/>
  </svg>
  <svg class="abs" style="left:1119px;top:573px" width="56" height="56" viewBox="0 0 56 56">
    <circle cx="28" cy="28" r="26.400" fill="#f2389a"/>
    <path d="M15.500 13.300h8v10.500h9v-10.500h8v28h-8v-10h-9v10h-8z" fill="#fff"/>
  </svg>
  <svg class="abs" style="left:636px;top:407px" width="12" height="17" viewBox="0 0 12 17">
    <path d="M1.500 1.500v11.500l3-2.500 2 4.500 1.800-.8-2-4.400h4z" fill="#fff" stroke="#444" stroke-width="1"/>
  </svg>
</div>
</body>
</html>
